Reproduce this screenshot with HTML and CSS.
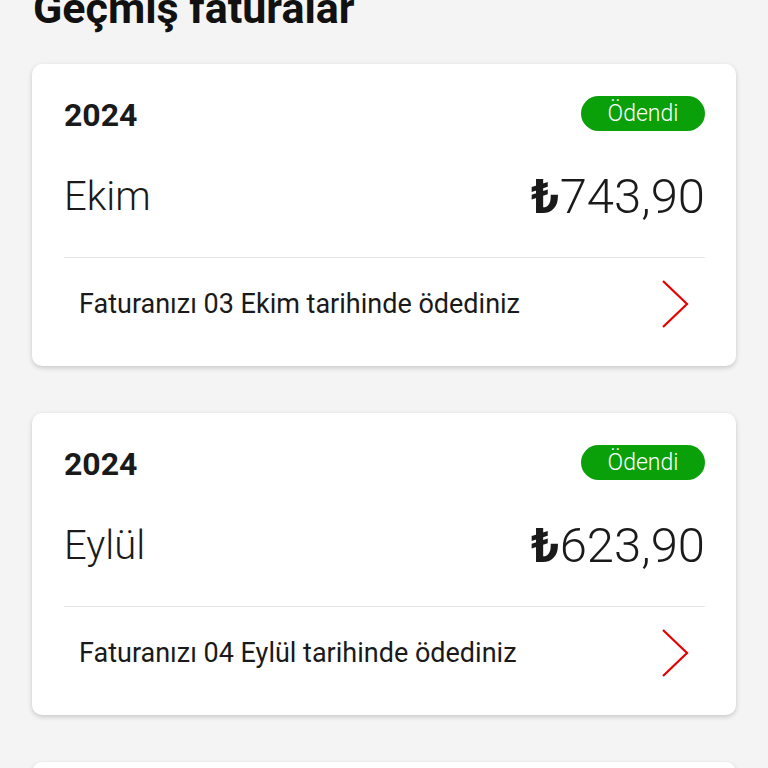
FILE: index.html
```html
<!DOCTYPE html>
<html lang="tr">
<head>
  <meta charset="UTF-8" />
  <meta name="viewport" content="width=device-width, initial-scale=1.0"/>
  <title>Geçmiş faturalar</title>
  <link rel="stylesheet" href="styles.css">
</head>
<body>
  <h1 class="page-title">Geçmiş faturalar</h1>

  <div class="bill-list">
    <div class="bill-card">
      <div class="bill-row">
        <span class="bill-year">2024</span>
        <span class="badge">Ödendi</span>
      </div>
      <div class="bill-row bill-main">
        <span class="bill-month">Ekim</span>
        <span class="bill-amount"><b class="lira">₺</b>743,90</span>
      </div>
      <a class="bill-footer" href="#">
        <span>Faturanızı 03 Ekim tarihinde ödediniz</span>
        <svg class="chevron" width="28" height="48" viewBox="0 0 28 48"><path d="M2 1 L26 24 L2 47" fill="none" stroke="#e60000" stroke-width="2.2"/></svg>
      </a>
    </div>

    <div class="bill-card">
      <div class="bill-row">
        <span class="bill-year">2024</span>
        <span class="badge">Ödendi</span>
      </div>
      <div class="bill-row bill-main">
        <span class="bill-month">Eylül</span>
        <span class="bill-amount"><b class="lira">₺</b>623,90</span>
      </div>
      <a class="bill-footer" href="#">
        <span>Faturanızı 04 Eylül tarihinde ödediniz</span>
        <svg class="chevron" width="28" height="48" viewBox="0 0 28 48"><path d="M2 1 L26 24 L2 47" fill="none" stroke="#e60000" stroke-width="2.2"/></svg>
      </a>
    </div>

    <div class="bill-card bill-card-empty"></div>
  </div>
</body>
</html>
```

FILE: styles.css
```css
body {
  font-family: Roboto, "Liberation Sans", sans-serif;
  background-color: #f4f4f4;
  color: #1a1a1a;
  margin: 0;
  overflow: hidden;
}

.page-title {
  font-size: 43px;
  font-weight: 700;
  line-height: 48px;
  margin: -16px 0 0 33px;
  color: #111;
}

.bill-list {
  display: flex;
  flex-direction: column;
  gap: 47px;
  margin-top: 32px;
  padding: 0 32px;
}

.bill-card {
  background: #fff;
  border-radius: 10px;
  box-shadow: 0 2px 5px rgba(0,0,0,0.18);
  padding: 0 31px 0 32px;
}

.bill-card-empty {
  height: 60px;
}

.bill-row {
  display: flex;
  justify-content: space-between;
  align-items: center;
}

.bill-row:first-child {
  padding-top: 32px;
}

.bill-year {
  font-size: 32px;
  font-weight: 700;
}

.badge {
  background: #0aa00a;
  color: #fff;
  font-size: 23px;
  font-weight: 300;
  line-height: 35px;
  width: 124px;
  text-align: center;
  border-radius: 18px;
  margin-top: -4px;
}

.bill-main {
  margin-top: 34px;
  padding-bottom: 32px;
  border-bottom: 1px solid #e4e4e4;
}

.bill-month {
  font-size: 40px;
  font-weight: 300;
}

.bill-amount {
  font-size: 49px;
  font-weight: 300;
}

.lira {
  font-weight: 700;
}

.bill-footer {
  display: flex;
  justify-content: space-between;
  align-items: center;
  padding: 22px 16px 38px 15px;
  color: #1a1a1a;
  text-decoration: none;
  font-size: 27px;
}

.chevron {
  display: block;
}
```
